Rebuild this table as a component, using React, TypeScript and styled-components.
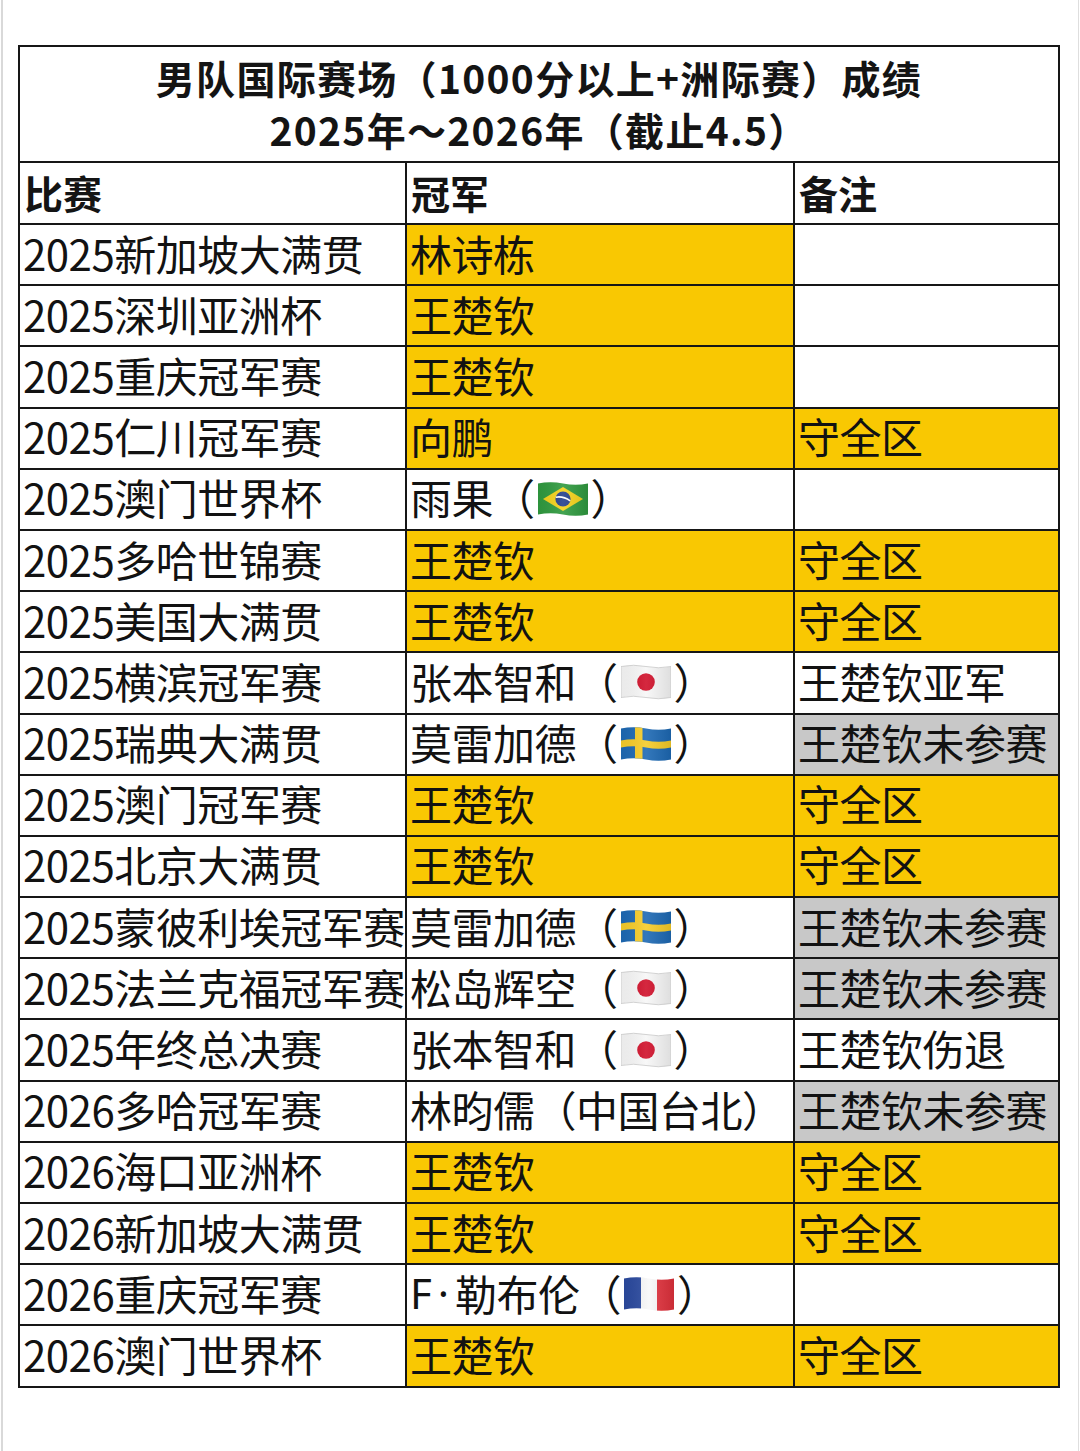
import React from "react";
import styled, { createGlobalStyle } from "styled-components";

type Tone = "yellow" | "gray" | "white";
type FlagCode = "br" | "jp" | "se" | "fr";

interface Champion {
  name: string;
  prefix?: string;
  flag?: FlagCode;
  suffix?: string;
}

interface ResultRow {
  event: string;
  champion: Champion;
  championTone: Tone;
  note: string;
  noteTone: Tone;
}

const GlobalStyle = createGlobalStyle`
  html, body {
    margin: 0;
    padding: 0;
    background: #ffffff;
  }

  body {
    font-family: "Noto Sans CJK SC", "Noto Sans", sans-serif;
    color: #111111;
  }
`;

const toneColor: Record<Tone, string> = {
  yellow: "#f9c802",
  gray: "#c8c8c8",
  white: "#ffffff",
};

const Page = styled.div`
  box-sizing: border-box;
  width: 1078px;
  min-height: 1451px;
  margin-left: 1px;
  padding: 45px 0 0 15px;
  border-left: 2px solid #d9d9d9;
  border-right: 1px solid #dedede;
  background: #ffffff;
`;

const Sheet = styled.div`
  display: grid;
  grid-template-columns: 385px 386px 263px;
  grid-template-rows: 114px 60px;
  grid-auto-rows: 59.2px;
  gap: 2px;
  width: 1042px;
  padding: 2px;
  box-sizing: border-box;
  background: #161616;
`;

const TitleCell = styled.div`
  grid-column: 1 / -1;
  display: flex;
  flex-direction: column;
  align-items: center;
  justify-content: center;
  padding-bottom: 3px;
  background: #ffffff;
  font-size: 39px;
  font-weight: 700;
  line-height: 52px;
  letter-spacing: 1.3px;
  color: #141414;
`;

const HeaderCell = styled.div`
  display: flex;
  align-items: center;
  padding: 0 0 2px 4px;
  background: #ffffff;
  font-size: 39px;
  font-weight: 700;
  color: #141414;
`;

const Cell = styled.div<{ $tone: Tone }>`
  display: flex;
  align-items: center;
  padding: 0 0 5px 3px;
  background: ${(p) => toneColor[p.$tone]};
  font-size: 42px;
  font-weight: 400;
  letter-spacing: -0.5px;
  white-space: nowrap;
  color: #121212;
`;

const Latin = styled.span`
  font-family: "Noto Sans", sans-serif;
  letter-spacing: 6px;
`;

const FlagBox = styled.svg`
  display: inline-block;
  width: 50px;
  height: 36px;
  margin: 4px 3px 0 3px;
  flex-shrink: 0;
`;

const wave = "M0 2.5 Q12.5 0 25 2.5 T50 2.5 V33.5 Q37.5 36 25 33.5 T0 33.5 Z";

const Flag = ({ code }: { code: FlagCode }) => {
  const id = `clip-${code}`;
  return (
    <FlagBox viewBox="0 0 50 36">
      <defs>
        <clipPath id={id}>
          <path d={wave} />
        </clipPath>
        <linearGradient id={`${id}-shade`} x1="0" x2="1" y1="0" y2="0">
          <stop offset="0" stopColor="#000" stopOpacity="0.05" />
          <stop offset="0.5" stopColor="#fff" stopOpacity="0.1" />
          <stop offset="1" stopColor="#000" stopOpacity="0.1" />
        </linearGradient>
      </defs>
      <g clipPath={`url(#${id})`}>
        {code === "br" && (
          <>
            <rect x="0" y="0" width="50" height="36" fill="#2f9a3f" />
            <path d="M25 6 L45 18 L25 30 L5 18 Z" fill="#f4d21a" />
            <circle cx="25" cy="18" r="7.6" fill="#233f8c" />
            <path d="M17.8 16.2 Q25 14.8 32.2 19.8" stroke="#ffffff" strokeWidth="1.6" fill="none" />
          </>
        )}
        {code === "jp" && (
          <>
            <rect x="0" y="0" width="50" height="36" fill="#f7f7f7" />
            <circle cx="25" cy="18" r="8.8" fill="#d0102a" />
          </>
        )}
        {code === "se" && (
          <>
            <rect x="0" y="0" width="50" height="36" fill="#1d69b4" />
            <rect x="14" y="0" width="7.5" height="36" fill="#f6cc29" />
            <path d="M0 14.5 Q12.5 12 25 14.5 T50 14.5 V21.5 Q37.5 24 25 21.5 T0 21.5 Z" fill="#f6cc29" />
          </>
        )}
        {code === "fr" && (
          <>
            <rect x="0" y="0" width="17" height="36" fill="#2b4a9f" />
            <rect x="17" y="0" width="16" height="36" fill="#f8f8f8" />
            <rect x="33" y="0" width="17" height="36" fill="#e0313c" />
          </>
        )}
        <rect x="0" y="0" width="50" height="36" fill={`url(#${id}-shade)`} />
      </g>
      {code === "jp" && <path d={wave} fill="none" stroke="#c8c8c8" strokeWidth="0.8" />}
    </FlagBox>
  );
};

const rows: ResultRow[] = [
  { event: "2025新加坡大满贯", champion: { name: "林诗栋" }, championTone: "yellow", note: "", noteTone: "white" },
  { event: "2025深圳亚洲杯", champion: { name: "王楚钦" }, championTone: "yellow", note: "", noteTone: "white" },
  { event: "2025重庆冠军赛", champion: { name: "王楚钦" }, championTone: "yellow", note: "", noteTone: "white" },
  { event: "2025仁川冠军赛", champion: { name: "向鹏" }, championTone: "yellow", note: "守全区", noteTone: "yellow" },
  { event: "2025澳门世界杯", champion: { name: "雨果", flag: "br" }, championTone: "white", note: "", noteTone: "white" },
  { event: "2025多哈世锦赛", champion: { name: "王楚钦" }, championTone: "yellow", note: "守全区", noteTone: "yellow" },
  { event: "2025美国大满贯", champion: { name: "王楚钦" }, championTone: "yellow", note: "守全区", noteTone: "yellow" },
  { event: "2025横滨冠军赛", champion: { name: "张本智和", flag: "jp" }, championTone: "white", note: "王楚钦亚军", noteTone: "white" },
  { event: "2025瑞典大满贯", champion: { name: "莫雷加德", flag: "se" }, championTone: "white", note: "王楚钦未参赛", noteTone: "gray" },
  { event: "2025澳门冠军赛", champion: { name: "王楚钦" }, championTone: "yellow", note: "守全区", noteTone: "yellow" },
  { event: "2025北京大满贯", champion: { name: "王楚钦" }, championTone: "yellow", note: "守全区", noteTone: "yellow" },
  { event: "2025蒙彼利埃冠军赛", champion: { name: "莫雷加德", flag: "se" }, championTone: "white", note: "王楚钦未参赛", noteTone: "gray" },
  { event: "2025法兰克福冠军赛", champion: { name: "松岛辉空", flag: "jp" }, championTone: "white", note: "王楚钦未参赛", noteTone: "gray" },
  { event: "2025年终总决赛", champion: { name: "张本智和", flag: "jp" }, championTone: "white", note: "王楚钦伤退", noteTone: "white" },
  { event: "2026多哈冠军赛", champion: { name: "林昀儒", suffix: "（中国台北）" }, championTone: "white", note: "王楚钦未参赛", noteTone: "gray" },
  { event: "2026海口亚洲杯", champion: { name: "王楚钦" }, championTone: "yellow", note: "守全区", noteTone: "yellow" },
  { event: "2026新加坡大满贯", champion: { name: "王楚钦" }, championTone: "yellow", note: "守全区", noteTone: "yellow" },
  { event: "2026重庆冠军赛", champion: { prefix: "F·", name: "勒布伦", flag: "fr" }, championTone: "white", note: "", noteTone: "white" },
  { event: "2026澳门世界杯", champion: { name: "王楚钦" }, championTone: "yellow", note: "守全区", noteTone: "yellow" },
];

const ChampionText = ({ champion }: { champion: Champion }) => (
  <>
    {champion.prefix && <Latin>{champion.prefix}</Latin>}
    {champion.name}
    {champion.flag && (
      <>
        （<Flag code={champion.flag} />）
      </>
    )}
    {champion.suffix}
  </>
);

export default function App() {
  return (
    <>
      <GlobalStyle />
      <Page>
        <Sheet>
          <TitleCell>
            <span>男队国际赛场（1000分以上+洲际赛）成绩</span>
            <span>2025年～2026年（截止4.5）</span>
          </TitleCell>
          <HeaderCell>比赛</HeaderCell>
          <HeaderCell>冠军</HeaderCell>
          <HeaderCell>备注</HeaderCell>
          {rows.map((row) => (
            <React.Fragment key={row.event}>
              <Cell $tone="white">{row.event}</Cell>
              <Cell $tone={row.championTone}>
                <ChampionText champion={row.champion} />
              </Cell>
              <Cell $tone={row.noteTone}>{row.note}</Cell>
            </React.Fragment>
          ))}
        </Sheet>
      </Page>
    </>
  );
}
